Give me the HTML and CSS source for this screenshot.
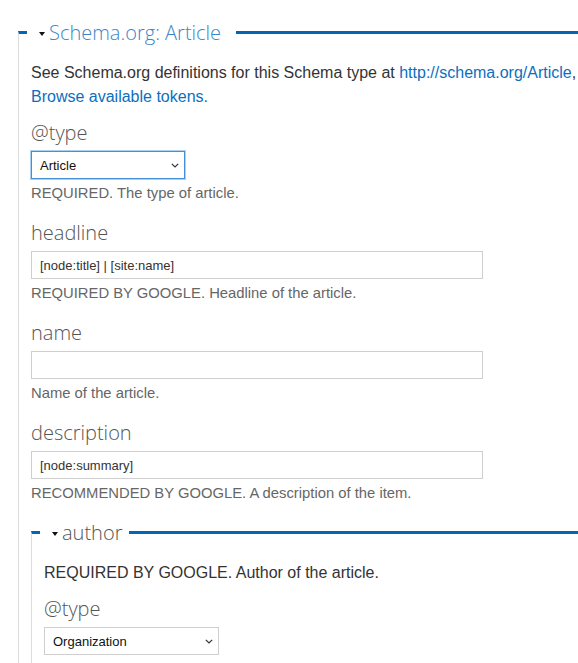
FILE: index.html
```html
<!DOCTYPE html>
<html lang="en">
<head>
<meta charset="utf-8">
<title>Schema.org: Article</title>
<link rel="stylesheet" href="styles.css">
</head>
<body>
<div class="page">
  <fieldset class="group group-outer">
    <legend class="group-legend legend-main"><span class="caret"></span>Schema.org: Article</legend>
    <div class="intro">See Schema.org definitions for this Schema type at <a href="#">http://schema.org/Article</a>, <a href="#">Browse available tokens.</a></div>

    <div class="form-item">
      <label class="field-label">@type</label>
      <div class="select-wrap select-focus">
        <select class="select"><option>Article</option></select>
        <svg class="chev" width="8" height="5" viewBox="0 0 8 5"><path d="M0.8 0.8 L4 4 L7.2 0.8" fill="none" stroke="#333" stroke-width="1.2"/></svg>
      </div>
      <div class="desc">REQUIRED. The type of article.</div>
    </div>

    <div class="form-item">
      <label class="field-label">headline</label>
      <input class="text-input" type="text" value="[node:title] | [site:name]">
      <div class="desc">REQUIRED BY GOOGLE. Headline of the article.</div>
    </div>

    <div class="form-item">
      <label class="field-label">name</label>
      <input class="text-input" type="text" value="">
      <div class="desc">Name of the article.</div>
    </div>

    <div class="form-item form-item-last">
      <label class="field-label">description</label>
      <input class="text-input" type="text" value="[node:summary]">
      <div class="desc">RECOMMENDED BY GOOGLE. A description of the item.</div>
    </div>

    <fieldset class="group group-inner">
      <legend class="group-legend legend-sub"><span class="caret"></span>author</legend>
      <div class="intro">REQUIRED BY GOOGLE. Author of the article.</div>
      <div class="form-item">
        <label class="field-label">@type</label>
        <div class="select-wrap select-wide">
          <select class="select"><option>Organization</option></select>
          <svg class="chev" width="8" height="5" viewBox="0 0 8 5"><path d="M0.8 0.8 L4 4 L7.2 0.8" fill="none" stroke="#333" stroke-width="1.2"/></svg>
        </div>
      </div>
    </fieldset>
  </fieldset>
</div>
</body>
</html>
```

FILE: styles.css
```css
html, body {
  margin: 0;
  padding: 0;
  background: #fff;
  overflow: hidden;
}

body {
  font-family: "Liberation Sans", Arial, sans-serif;
  font-size: 14.8px;
  color: #333;
}

.page {
  padding: 18px 0 0 18px;
  width: 640px;
}

.group {
  margin: 0;
  padding: 14px 0 0 12px;
  border: 0;
  border-top: 3px solid #0066b5;
  border-left: 1px solid #dcdcdc;
  min-width: 0;
}

.group-outer {
  width: 575px;
}

.group-inner {
  margin-top: 15px;
}

.group-legend {
  margin-left: -4px;
  font-family: "Open Sans", sans-serif;
  font-weight: 300;
  font-size: 20px;
  line-height: 29px;
}

.legend-main {
  padding: 0 15px 0 12px;
  color: #3d85c6;
}

.legend-sub {
  padding: 0 7px 0 12px;
  color: #555;
}

.caret {
  display: inline-block;
  width: 0;
  height: 0;
  border-left: 3.5px solid transparent;
  border-right: 3.5px solid transparent;
  border-top: 4px solid #111;
  margin-right: 4px;
  vertical-align: middle;
  position: relative;
  top: -1px;
}

.intro {
  font-size: 16px;
  line-height: 24px;
  margin-bottom: 11px;
}

.intro a {
  color: #0b6fc0;
  text-decoration: none;
}

.form-item {
  margin-bottom: 17px;
}

.form-item-last {
  margin-bottom: 0;
}

.field-label {
  display: block;
  font-family: "Open Sans", sans-serif;
  font-weight: 300;
  font-size: 20px;
  line-height: 26px;
  color: #555;
  margin-bottom: 5px;
}

.text-input {
  display: block;
  box-sizing: border-box;
  width: 452px;
  height: 28px;
  margin: 0;
  padding: 0 8px;
  border: 1px solid #cfcfcf;
  border-radius: 0;
  font-family: "Liberation Sans", Arial, sans-serif;
  font-size: 13px;
  color: #333;
  background: #fff;
  outline: none;
}

.select-wrap {
  position: relative;
  width: 154px;
  height: 28px;
}

.select-wide {
  width: 175px;
}

.select {
  display: block;
  box-sizing: border-box;
  width: 100%;
  height: 28px;
  margin: 0;
  padding: 0 20px 0 8px;
  border: 1px solid #cfcfcf;
  border-radius: 0;
  -webkit-appearance: none;
  appearance: none;
  background: #fff;
  font-family: "Liberation Sans", Arial, sans-serif;
  font-size: 13px;
  color: #111;
  outline: none;
}

.select-focus .select {
  border-color: #4a8fd9;
  box-shadow: 0 0 0 1px #a9cff3;
}

.chev {
  position: absolute;
  right: 6px;
  top: 12px;
}

.desc {
  margin-top: 4px;
  line-height: 20px;
  color: #666;
}
```
